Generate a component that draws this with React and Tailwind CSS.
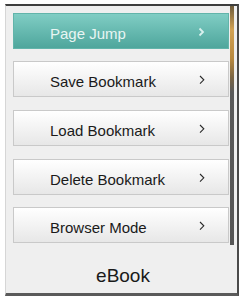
import React from 'react';

const items = [
  { label: 'Page Jump', active: true, mt: 'mt-[7px]' },
  { label: 'Save Bookmark', mt: 'mt-[12px]' },
  { label: 'Load Bookmark', mt: 'mt-[13px]' },
  { label: 'Delete Bookmark', mt: 'mt-[13px]' },
  { label: 'Browser Mode', mt: 'mt-[12px]' },
];

function Chevron({ active }) {
  return active ? (
    <svg width="7" height="10" viewBox="0 0 7 10" fill="none" className="mt-[1px] text-[#d9f1ee]">
      <path d="M1.5 1.5L5 5L1.5 8.5" stroke="currentColor" strokeWidth="1.8" />
    </svg>
  ) : (
    <svg width="6" height="10" viewBox="0 0 6 10" fill="none" className="mt-[2px] text-[#2a2a2a]">
      <path d="M1 1L4.8 4.8L1 8.6" stroke="currentColor" strokeWidth="1.1" />
    </svg>
  );
}

function MenuButton({ label, active, mt }) {
  return (
    <div
      className={`${mt} w-[216px] h-[36px] flex items-center justify-between pl-[36px] pr-[23px] border ${
        active
          ? 'border-[#62b4aa] bg-[linear-gradient(to_bottom,#80cdc4,#4ea69c)] text-[#e8f5f3]'
          : 'border-[#c9c9c9] bg-[linear-gradient(to_bottom,#ffffff,#e7e7e7)] text-[#1a1a1a]'
      }`}
    >
      <span className="mt-[5px] text-[15px] leading-[17px] whitespace-nowrap">{label}</span>
      <Chevron active={active} />
    </div>
  );
}

export default function App() {
  return (
    <div className="w-[240px] h-[299px] bg-white overflow-hidden pt-[4px] pl-[5px]" style={{ fontFamily: '"Liberation Sans", Arial, sans-serif' }}>
      <div className="w-[234px] h-[292px] bg-[#efefef] border-t-2 border-t-[#3e3e3e] border-b-[3px] border-b-[#5a5a5a] border-l border-l-[#d6d6d6] border-r-2 border-r-[#4a4a4a] flex">
        <div className="w-[224px] pl-[7px] flex flex-col">
          {items.map((it) => (
            <MenuButton key={it.label} {...it} />
          ))}
          <div className="mt-[22px] pl-[3px] text-center text-[19px] leading-[22px] text-[#1a1a1a]">eBook</div>
        </div>
        <div className="w-[4px] h-[239px] bg-[linear-gradient(to_bottom,#6e5c3c_0%,#d2a253_10%,#b8893f_22%,#7a6443_30%,#5a5a5a_36%,#565656_100%)]" />
        <div className="flex-1" />
      </div>
    </div>
  );
}
